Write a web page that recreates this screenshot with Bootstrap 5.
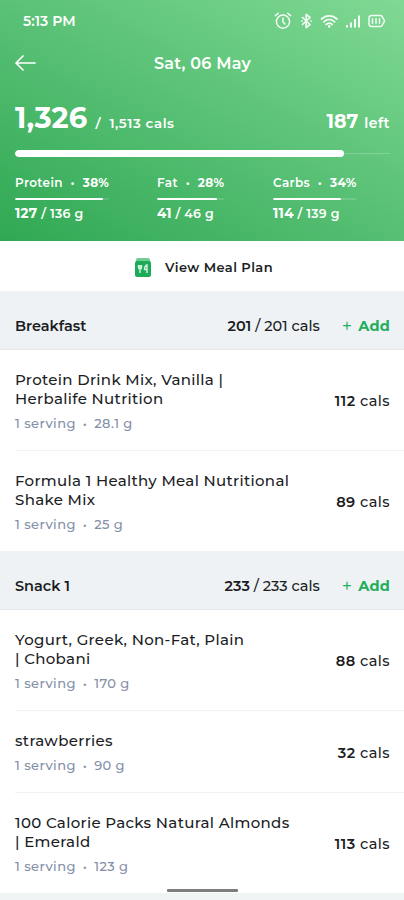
<!DOCTYPE html>
<html lang="en">
<head>
<meta charset="utf-8">
<meta name="viewport" content="width=device-width, initial-scale=1">
<title>Meal diary</title>
<link href="https://cdn.jsdelivr.net/npm/bootstrap@5.3.0/dist/css/bootstrap.min.css" rel="stylesheet">
<style>
body{font-family:Montserrat,Inter,sans-serif;background:#f1f4f5;color:#1b1d1f;height:900px;overflow:hidden;font-size:14.5px;line-height:19px}
.hero{height:241px;padding:0 14px 0 15px;color:#fff;background:linear-gradient(28deg,#30a853 0%,#56bf73 48%,#80d994 100%)}
.status{height:42px;padding-left:8px;padding-right:3px;font-size:14px;letter-spacing:.05px;font-weight:600}
.status svg{display:block}
.topbar{height:42px;display:grid;grid-template-columns:60px 1fr 60px;align-items:center}
.day{font-size:16px;font-weight:600;letter-spacing:.25px}
.totals{height:66px;padding-top:16px;line-height:36px}
.eaten{font-size:29px;font-weight:700;letter-spacing:.1px}
.goal{font-size:13.5px;font-weight:600;letter-spacing:.52px;margin-left:8px}
.left-num{font-size:19px;font-weight:700}
.left-word{font-size:14px;font-weight:600;letter-spacing:.5px;margin-left:2px}
.track{height:7px;background:none;border-radius:4px;position:relative}
.track::before{content:"";position:absolute;left:0;right:0;top:3px;height:1px;background:#ffffff38}
.track .progress-bar{background:#fff;border-radius:4px;position:relative}
.macros{display:grid;grid-template-columns:142px 116px 1fr;padding-top:17px}
.macro-name{font-size:12px;font-weight:600;line-height:18px;letter-spacing:.38px;white-space:nowrap}
.macro-name b,.macro-qty b{font-weight:700}
.macro-name .dot{margin:0 4px}
.macro-line{height:2px;margin:6px 0 4px;background:#ffffff26;border-radius:1px}
.macro-line .progress-bar{background:#fff;border-radius:1px}
.macro-qty{font-size:12.5px;font-weight:600;line-height:18px;letter-spacing:.3px}
.macro-qty b{font-size:13.5px}
.plan{height:50px;background:#fff;font-size:13px;font-weight:600;letter-spacing:.42px;gap:14px;padding:2px 0 0 4px}
.meal-head{height:59px;background:#eef2f5;border-bottom:1px solid #e4e8ea;padding:12px 14px 0 15px;font-weight:600}
.meal-head .num{font-weight:500}
.meal-head .num b,.kcal b{font-weight:600}
.add{color:#22ae5b;font-weight:700;letter-spacing:.2px;margin-left:22px;background:none;border:0;padding:0}
.add span{font-weight:400;font-size:18px;line-height:16px;margin-right:6px}
.food{background:#fff;padding:20px 14px 18px 0;margin-left:15px;border-bottom:1px solid #eff1f3}
.food:last-child{border-bottom:0}
.foods{background:#fff}
.food-name{font-size:15px;letter-spacing:.33px;font-weight:500}
.portion{font-size:13px;line-height:18px;margin-top:6px;color:#858fa8;letter-spacing:.42px;font-weight:500}
.kcal{letter-spacing:.45px;font-weight:500;padding-top:1px}
.dot{margin:0 3px}
.homebar{position:absolute;left:167px;top:889px;width:71px;height:3px;background:#7d7d7d;border-radius:1px}
</style>
</head>
<body>
<header class="hero">
  <div class="status d-flex align-items-center justify-content-between">
    <span>5:13 PM</span>
    <svg width="114" height="20" viewBox="0 0 114 20" fill="none" stroke="#fff" stroke-width="1.500" stroke-linecap="round" stroke-linejoin="round" opacity=".92">
      <circle cx="10" cy="10.600" r="6.600"/><path d="M10 7v4l2 2M2.400 4.600l2.800-2.300M17.600 4.600l-2.800-2.300"/>
      <path d="M29.500 6.500l7.500 7-3.800 3.200V3.300l3.800 3.200-7.500 7M28.800 10h.2M38 10h.2" stroke-width="1.700"/>
      <path d="M48.500 8c4.500-4.200 11-4.200 15.500 0M50.800 10.800c3.200-3 7.600-3 10.800 0M53.200 13.500c1.800-1.600 4.200-1.600 6 0" stroke-width="1.800"/><circle cx="56.200" cy="15.400" r=".6" fill="#fff"/>
      <path d="M74 14v2.500M78 11.500v5M82 8v8.500M86 4.500v12" stroke-width="2" stroke-linecap="butt"/>
      <path d="M98.500 4.500h9q1 0 1.500.8l2.300 4q.4.7 0 1.400l-2.300 4q-.5.800-1.500.800h-9q-2.500 0-2.500-2.500v-6q0-2.500 2.500-2.500zM99.500 7.800v4.400M103 7.800v4.400M106.500 7.800v4.400"/>
    </svg>
  </div>
  <div class="topbar">
    <svg width="22" height="18" viewBox="0 0 22 18" fill="none" stroke="#fff" stroke-width="1.700" stroke-linecap="round" stroke-linejoin="round"><path d="M20 9H1M8 2L1 9l7 7"/></svg>
    <div class="day text-center">Sat, 06 May</div>
  </div>
  <div class="totals d-flex justify-content-between align-items-baseline">
    <div><span class="eaten">1,326</span><span class="goal">/ &nbsp;1,513 cals</span></div>
    <div><span class="left-num">187</span> <span class="left-word">left</span></div>
  </div>
  <div class="track progress"><div class="progress-bar" style="width:87.600%"></div></div>
  <div class="macros">
    <div><div class="macro-name">Protein <span class="dot">•</span> <b>38%</b></div><div class="macro-line progress" style="width:94px"><div class="progress-bar" style="width:93.400%"></div></div><div class="macro-qty"><b>127</b> / 136 g</div></div>
    <div><div class="macro-name">Fat <span class="dot">•</span> <b>28%</b></div><div class="macro-line progress" style="width:67px"><div class="progress-bar" style="width:89.100%"></div></div><div class="macro-qty"><b>41</b> / 46 g</div></div>
    <div><div class="macro-name">Carbs <span class="dot">•</span> <b>34%</b></div><div class="macro-line progress" style="width:83px"><div class="progress-bar" style="width:82%"></div></div><div class="macro-qty"><b>114</b> / 139 g</div></div>
  </div>
</header>
<div class="plan d-flex align-items-center justify-content-center">
  <svg width="16" height="19" viewBox="0 0 16 19"><rect x="1" width="14" height="6" rx="2" fill="#71cc91"/><rect y="3" width="16" height="16" rx="2" fill="#1cab58"/><path d="M3.500 7v2.500q0 1.500 1.500 1.500V15M5 7v4M6.500 7v2.500Q6.500 11 5 11M12 15V7q-2.500 1-2.500 4.500H12" fill="none" stroke="#d5f3df" stroke-width="1.400"/></svg>
  <span>View Meal Plan</span>
</div>
<main>
  <section>
    <div class="meal-head d-flex align-items-center"><span class="me-auto">Breakfast</span><span class="num"><b>201</b> / 201 cals</span><button class="add d-flex align-items-center"><span>+</span>Add</button></div>
    <div class="foods">
      <div class="food d-flex align-items-center justify-content-between"><div><div class="food-name">Protein Drink Mix, Vanilla |<br>Herbalife Nutrition</div><div class="portion">1 serving <span class="dot">•</span> 28.1 g</div></div><div class="kcal"><b>112</b> cals</div></div>
      <div class="food d-flex align-items-center justify-content-between"><div><div class="food-name">Formula 1 Healthy Meal Nutritional<br>Shake Mix</div><div class="portion">1 serving <span class="dot">•</span> 25 g</div></div><div class="kcal"><b>89</b> cals</div></div>
    </div>
  </section>
  <section>
    <div class="meal-head d-flex align-items-center"><span class="me-auto">Snack 1</span><span class="num"><b>233</b> / 233 cals</span><button class="add d-flex align-items-center"><span>+</span>Add</button></div>
    <div class="foods">
      <div class="food d-flex align-items-center justify-content-between"><div><div class="food-name">Yogurt, Greek, Non-Fat, Plain<br>| Chobani</div><div class="portion">1 serving <span class="dot">•</span> 170 g</div></div><div class="kcal"><b>88</b> cals</div></div>
      <div class="food d-flex align-items-center justify-content-between"><div><div class="food-name">strawberries</div><div class="portion">1 serving <span class="dot">•</span> 90 g</div></div><div class="kcal"><b>32</b> cals</div></div>
      <div class="food d-flex align-items-center justify-content-between"><div><div class="food-name">100 Calorie Packs Natural Almonds<br>| Emerald</div><div class="portion">1 serving <span class="dot">•</span> 123 g</div></div><div class="kcal"><b>113</b> cals</div></div>
    </div>
  </section>
</main>
<div class="homebar"></div>
<script src="https://cdn.jsdelivr.net/npm/bootstrap@5.3.0/dist/js/bootstrap.bundle.min.js"></script>
</body>
</html>
